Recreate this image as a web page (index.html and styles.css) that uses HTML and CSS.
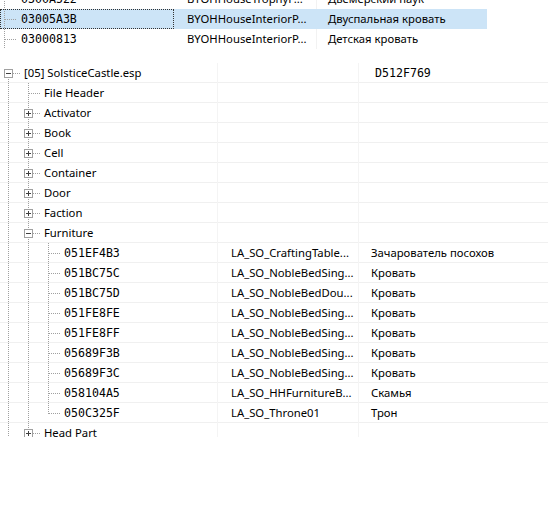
FILE: index.html
```html
<!DOCTYPE html>
<html lang="ru">
<head>
    <meta charset="UTF-8">
    <title>SolsticeCastle.esp</title>
    <link rel="stylesheet" href="styles.css">
</head>
<body>
    <!-- верхний список, прокручен -->
    <div class="pane pane-top">
        <div class="scroll">
            <div class="row">
                <div class="cell c1"><span class="ind flat tee"></span><span class="hex">0300A522</span></div>
                <div class="cell c2">BYOHHouseTrophyP...</div>
                <div class="cell c3">Двемерский паук</div>
            </div>
            <div class="row selected">
                <div class="cell c1 focus"><span class="ind flat tee"></span><span class="hex">03005A3B</span></div>
                <div class="cell c2">BYOHHouseInteriorP...</div>
                <div class="cell c3">Двуспальная кровать</div>
            </div>
            <div class="row">
                <div class="cell c1"><span class="ind flat tee"></span><span class="hex">03000813</span></div>
                <div class="cell c2">BYOHHouseInteriorP...</div>
                <div class="cell c3">Детская кровать</div>
            </div>
        </div>
    </div>

    <!-- дерево плагина -->
    <div class="pane pane-tree">
        <div class="row lined">
            <div class="cell b1"><span class="ind head"><i class="tog minus"></i></span><span class="label">[05] SolsticeCastle.esp</span></div>
            <div class="cell b2"></div>
            <div class="cell b3"><span class="hex">D512F769</span></div>
        </div>
        <div class="row lined">
            <div class="cell b1"><span class="ind pipe"></span><span class="ind tee"></span><span class="label">File Header</span></div>
            <div class="cell b2"></div><div class="cell b3"></div>
        </div>
        <div class="row lined">
            <div class="cell b1"><span class="ind pipe"></span><span class="ind tee"><i class="tog plus"></i></span><span class="label">Activator</span></div>
            <div class="cell b2"></div><div class="cell b3"></div>
        </div>
        <div class="row lined">
            <div class="cell b1"><span class="ind pipe"></span><span class="ind tee"><i class="tog plus"></i></span><span class="label">Book</span></div>
            <div class="cell b2"></div><div class="cell b3"></div>
        </div>
        <div class="row lined">
            <div class="cell b1"><span class="ind pipe"></span><span class="ind tee"><i class="tog plus"></i></span><span class="label">Cell</span></div>
            <div class="cell b2"></div><div class="cell b3"></div>
        </div>
        <div class="row lined">
            <div class="cell b1"><span class="ind pipe"></span><span class="ind tee"><i class="tog plus"></i></span><span class="label">Container</span></div>
            <div class="cell b2"></div><div class="cell b3"></div>
        </div>
        <div class="row lined">
            <div class="cell b1"><span class="ind pipe"></span><span class="ind tee"><i class="tog plus"></i></span><span class="label">Door</span></div>
            <div class="cell b2"></div><div class="cell b3"></div>
        </div>
        <div class="row lined">
            <div class="cell b1"><span class="ind pipe"></span><span class="ind tee"><i class="tog plus"></i></span><span class="label">Faction</span></div>
            <div class="cell b2"></div><div class="cell b3"></div>
        </div>
        <div class="row lined">
            <div class="cell b1"><span class="ind pipe"></span><span class="ind tee open"><i class="tog minus"></i></span><span class="label">Furniture</span></div>
            <div class="cell b2"></div><div class="cell b3"></div>
        </div>

        <div class="row lined">
            <div class="cell b1"><span class="ind pipe"></span><span class="ind pipe"></span><span class="ind tee"></span><span class="hex">051EF4B3</span></div>
            <div class="cell b2">LA_SO_CraftingTable...</div>
            <div class="cell b3">Зачарователь посохов</div>
        </div>
        <div class="row lined">
            <div class="cell b1"><span class="ind pipe"></span><span class="ind pipe"></span><span class="ind tee"></span><span class="hex">051BC75C</span></div>
            <div class="cell b2">LA_SO_NobleBedSing...</div>
            <div class="cell b3">Кровать</div>
        </div>
        <div class="row lined">
            <div class="cell b1"><span class="ind pipe"></span><span class="ind pipe"></span><span class="ind tee"></span><span class="hex">051BC75D</span></div>
            <div class="cell b2">LA_SO_NobleBedDou...</div>
            <div class="cell b3">Кровать</div>
        </div>
        <div class="row lined">
            <div class="cell b1"><span class="ind pipe"></span><span class="ind pipe"></span><span class="ind tee"></span><span class="hex">051FE8FE</span></div>
            <div class="cell b2">LA_SO_NobleBedSing...</div>
            <div class="cell b3">Кровать</div>
        </div>
        <div class="row lined">
            <div class="cell b1"><span class="ind pipe"></span><span class="ind pipe"></span><span class="ind tee"></span><span class="hex">051FE8FF</span></div>
            <div class="cell b2">LA_SO_NobleBedSing...</div>
            <div class="cell b3">Кровать</div>
        </div>
        <div class="row lined">
            <div class="cell b1"><span class="ind pipe"></span><span class="ind pipe"></span><span class="ind tee"></span><span class="hex">05689F3B</span></div>
            <div class="cell b2">LA_SO_NobleBedSing...</div>
            <div class="cell b3">Кровать</div>
        </div>
        <div class="row lined">
            <div class="cell b1"><span class="ind pipe"></span><span class="ind pipe"></span><span class="ind tee"></span><span class="hex">05689F3C</span></div>
            <div class="cell b2">LA_SO_NobleBedSing...</div>
            <div class="cell b3">Кровать</div>
        </div>
        <div class="row lined">
            <div class="cell b1"><span class="ind pipe"></span><span class="ind pipe"></span><span class="ind tee"></span><span class="hex">058104A5</span></div>
            <div class="cell b2">LA_SO_HHFurnitureB...</div>
            <div class="cell b3">Скамья</div>
        </div>
        <div class="row lined">
            <div class="cell b1"><span class="ind pipe"></span><span class="ind pipe"></span><span class="ind ell"></span><span class="hex">050C325F</span></div>
            <div class="cell b2">LA_SO_Throne01</div>
            <div class="cell b3">Трон</div>
        </div>

        <div class="row lined">
            <div class="cell b1"><span class="ind pipe"></span><span class="ind tee"><i class="tog plus"></i></span><span class="label">Head Part</span></div>
            <div class="cell b2"></div><div class="cell b3"></div>
        </div>
    </div>
</body>
</html>
```
FILE: styles.css
```css
:root {
    --dot-v: repeating-linear-gradient(to bottom, #a0a0a0 0 1px, transparent 1px 2px);
    --dot-h: repeating-linear-gradient(to right, #a0a0a0 0 1px, transparent 1px 2px);
}
body {
    margin: 0;
    background: #fff;
    color: #000;
    font-family: "Noto Sans", sans-serif;
    font-size: 11.3px;
}
.pane {
    overflow: hidden;
}
.pane-top {
    height: 49px;
}
.pane-top .scroll {
    margin-top: -11px;
}
.pane-tree {
    margin-top: 14px;
    height: 374px;
}
.row {
    display: flex;
    height: 20px;
    line-height: 20px;
}
.row.lined {
    width: 548px;
    box-shadow: inset 0 -1px 0 #f0f0f0;
}
.row.selected {
    width: 487px;
    background: #cce4f7;
}
.cell {
    display: flex;
    align-items: center;
    white-space: nowrap;
    overflow: hidden;
    box-sizing: border-box;
    height: 20px;
}
.c1 { width: 174px; }
.c2 { width: 142px; padding-left: 13px; }
.c3 { flex: 1; padding-left: 11px; border-left: 1px solid #f2f2f2; }
.selected .c3 { border-left-color: #cce4f7; }
.focus {
    outline: 1px dotted #333;
    outline-offset: -1px;
}
.b1 { width: 217px; }
.b2 { width: 141px; padding-left: 13px; border-left: 1px solid #f4f4f4; }
.b3 { flex: 1; padding-left: 12px; border-left: 1px solid #f4f4f4; }

.hex {
    font-family: "DejaVu Sans Mono", monospace;
    font-size: 11.6px;
    margin-left: 4px;
}
.label {
    margin-left: 4px;
}

/* линии дерева */
.ind {
    flex: none;
    display: flex;
    align-items: flex-start;
    width: 20px;
    height: 20px;
    background-repeat: no-repeat;
}
.ind.pipe {
    background-image: var(--dot-v);
    background-position: 8px 0;
    background-size: 1px 20px;
}
.ind.tee {
    background-image: var(--dot-v), var(--dot-h);
    background-position: 8px 0, 9px 10px;
    background-size: 1px 20px, 11px 1px;
}
.ind.ell {
    background-image: var(--dot-v), var(--dot-h);
    background-position: 8px 0, 9px 10px;
    background-size: 1px 11px, 11px 1px;
}
.ind.head {
    background-image: var(--dot-v), var(--dot-h);
    background-position: 8px 10px, 9px 10px;
    background-size: 1px 10px, 11px 1px;
}
.ind.flat {
    width: 17px;
    background-position: 4px 0, 5px 10px;
    background-size: 1px 20px, 12px 1px;
}

.tog {
    display: flex;
    align-items: center;
    justify-content: center;
    position: relative;
    box-sizing: border-box;
    width: 9px;
    height: 9px;
    margin: 6px 0 0 4px;
    border: 1px solid #a0a0a0;
    background: #fff;
}
.tog::before {
    content: "";
    width: 5px;
    height: 1px;
    background: #404040;
}
.tog.plus::after {
    content: "";
    position: absolute;
    left: 3px;
    top: 1px;
    width: 1px;
    height: 5px;
    background: #404040;
}
```
